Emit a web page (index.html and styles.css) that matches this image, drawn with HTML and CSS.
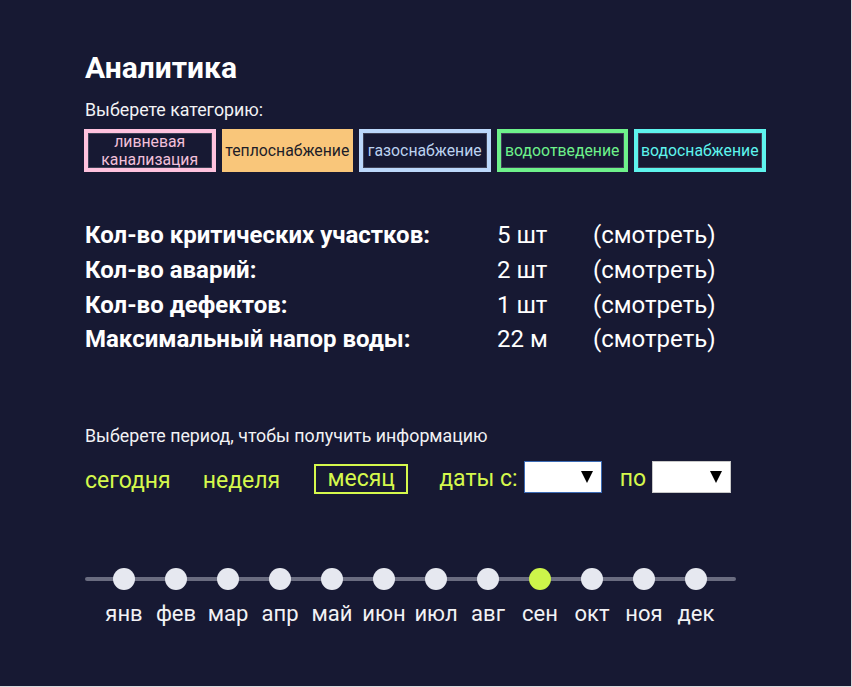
FILE: index.html
```html
<!DOCTYPE html>
<html lang="ru">
<head>
<meta charset="utf-8">
<link rel="stylesheet" href="styles.css">
</head>
<body>
<div class="frame">
  <h1 class="title">Аналитика</h1>
  <div class="hint">Выберете категорию:</div>
  <div class="cats">
    <div class="cat cat-pink">ливневая<br>канализация</div>
    <div class="cat cat-orange">теплоснабжение</div>
    <div class="cat cat-blue">газоснабжение</div>
    <div class="cat cat-green">водоотведение</div>
    <div class="cat cat-cyan">водоснабжение</div>
  </div>
  <div class="stats">
    <div class="st-label">Кол-во критических участков:</div><div class="st-val">5 шт</div><div class="st-link">(смотреть)</div>
    <div class="st-label">Кол-во аварий:</div><div class="st-val">2 шт</div><div class="st-link">(смотреть)</div>
    <div class="st-label">Кол-во дефектов:</div><div class="st-val">1 шт</div><div class="st-link">(смотреть)</div>
    <div class="st-label">Максимальный напор воды:</div><div class="st-val">22 м</div><div class="st-link">(смотреть)</div>
  </div>
  <div class="hint period-hint">Выберете период, чтобы получить информацию</div>
  <div class="period">
    <span class="p-item p-today">сегодня</span>
    <span class="p-item p-week">неделя</span>
    <span class="p-item p-month">месяц</span>
    <span class="p-item p-dates">даты с:</span>
    <div class="select sel-from"><span class="arrow"></span></div>
    <span class="p-item p-to">по</span>
    <div class="select sel-to"><span class="arrow"></span></div>
  </div>
  <div class="timeline">
    <div class="track"></div>
    <div class="months">
      <div class="month"><span class="dot"></span><span class="m-name">янв</span></div>
      <div class="month"><span class="dot"></span><span class="m-name">фев</span></div>
      <div class="month"><span class="dot"></span><span class="m-name">мар</span></div>
      <div class="month"><span class="dot"></span><span class="m-name">апр</span></div>
      <div class="month"><span class="dot"></span><span class="m-name">май</span></div>
      <div class="month"><span class="dot"></span><span class="m-name">июн</span></div>
      <div class="month"><span class="dot"></span><span class="m-name">июл</span></div>
      <div class="month"><span class="dot"></span><span class="m-name">авг</span></div>
      <div class="month active"><span class="dot"></span><span class="m-name">сен</span></div>
      <div class="month"><span class="dot"></span><span class="m-name">окт</span></div>
      <div class="month"><span class="dot"></span><span class="m-name">ноя</span></div>
      <div class="month"><span class="dot"></span><span class="m-name">дек</span></div>
    </div>
  </div>
</div>
</body>
</html>
```
FILE: styles.css
```css
html { background: #d9d9dc; }
body { margin: 0; font-family: Roboto, "Noto Sans", sans-serif; color: #fff; }
.frame {
  width: 851px;
  height: 686px;
  background: #171933;
  box-sizing: border-box;
  padding: 50px 0 0 85px;
}
.title {
  margin: 0;
  font-size: 30px;
  font-weight: 700;
  line-height: 36px;
}
.hint {
  margin-top: 13px;
  font-size: 17.8px;
  line-height: 22px;
  color: #f2f2f5;
}
.cats {
  display: flex;
  gap: 6px;
  margin: 8px 0 0 -1px;
}
.cat {
  width: 131.5px;
  height: 43px;
  box-sizing: border-box;
  border: 4px solid;
  display: flex;
  align-items: center;
  justify-content: center;
  text-align: center;
  font-size: 15.8px;
  line-height: 18px;
  box-shadow: inset 0 0 0 1px rgba(255,255,255,0.18);
}
.cat-pink { border-color: #ffc2de; color: #f2c0da; }
.cat-orange { border-color: #f9c67a; background: #f9c67a; color: #1d1d28; box-shadow: none; }
.cat-blue { border-color: #bcd8fb; color: #bcd2f0; }
.cat-green { border-color: #6ef28b; color: #6ef28b; }
.cat-cyan { border-color: #5ef4ee; color: #5ef4ee; }
.stats {
  margin-top: 46px;
  display: grid;
  grid-template-columns: 412px 96px auto;
  grid-auto-rows: 34.7px;
  align-items: center;
  font-size: 24px;
}
.st-label { font-weight: 700; }
.st-val, .st-link { font-weight: 400; }
.period-hint { margin-top: 68px; }
.period {
  display: flex;
  align-items: center;
  margin-top: 15px;
  height: 34px;
  color: #d5f84c;
  font-size: 23px;
}
.p-item { line-height: 28px; }
.p-today { margin-top: 4px; }
.p-week { margin-left: 32px; margin-top: 4px; }
.p-month {
  margin-left: 34px;
  width: 94px;
  height: 30px;
  box-sizing: border-box;
  border: 2px solid #d5f84c;
  text-align: center;
  line-height: 25px;
}
.p-dates { margin-left: 31px; }
.select {
  width: 78px;
  height: 32px;
  box-sizing: border-box;
  background: #fff;
  border: 1px solid #c8c8c8;
  position: relative;
  margin-left: 6px;
  margin-top: -3px;
}
.sel-to { width: 79px; }
.sel-from { border-color: #3c6bb5; }
.p-to { margin-left: 18px; }
.arrow {
  position: absolute;
  right: 8px;
  top: 9px;
  width: 0;
  height: 0;
  border-left: 6px solid transparent;
  border-right: 6px solid transparent;
  border-top: 12px solid #000;
}
.timeline {
  margin-top: 72px;
  width: 651px;
  position: relative;
}
.track {
  position: absolute;
  left: 0;
  right: 0;
  top: 9px;
  height: 4px;
  border-radius: 2px;
  background: #6a6c80;
}
.months {
  display: flex;
  padding-left: 13px;
  position: relative;
}
.month {
  width: 52px;
  display: flex;
  flex-direction: column;
  align-items: center;
}
.dot {
  width: 22px;
  height: 22px;
  border-radius: 50%;
  background: #e6e8f0;
}
.month.active .dot { background: #cdf54a; }
.m-name {
  margin-top: 11px;
  font-size: 22px;
  line-height: 26px;
  color: #f2f2f5;
}
```
